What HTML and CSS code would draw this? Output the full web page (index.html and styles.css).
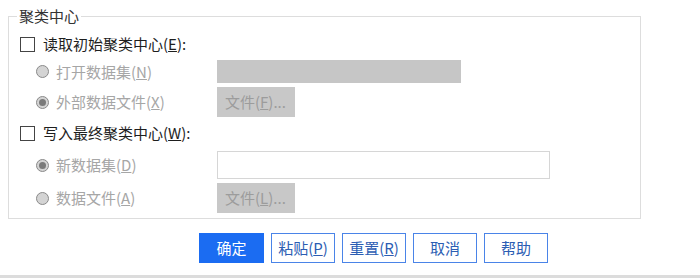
FILE: index.html
```html
<!DOCTYPE html>
<html lang="zh-CN">
<head>
<meta charset="utf-8">
<title>聚类中心</title>
<link rel="stylesheet" href="styles.css">
</head>
<body>
<div class="dialog">
  <fieldset class="group">
    <legend class="legend">聚类中心</legend>
    <div class="rows">
      <div class="row row-check1">
        <span class="checkbox"></span>
        <span class="check-label">读取初始聚类中心(<u>E</u>):</span>
      </div>
      <div class="row row-r1">
        <div class="radio-cell"><span class="radio"></span><span class="radio-label">打开数据集(<u>N</u>)</span></div>
        <div class="select-disabled"></div>
      </div>
      <div class="row row-r2">
        <div class="radio-cell"><span class="radio checked"></span><span class="radio-label">外部数据文件(<u>X</u>)</span></div>
        <div class="file-btn">文件(<u>F</u>)...</div>
      </div>
      <div class="row row-check2">
        <span class="checkbox"></span>
        <span class="check-label">写入最终聚类中心(<u>W</u>):</span>
      </div>
      <div class="row row-r3">
        <div class="radio-cell"><span class="radio checked"></span><span class="radio-label">新数据集(<u>D</u>)</span></div>
        <div class="text-input"></div>
      </div>
      <div class="row row-r4">
        <div class="radio-cell"><span class="radio"></span><span class="radio-label">数据文件(<u>A</u>)</span></div>
        <div class="file-btn">文件(<u>L</u>)...</div>
      </div>
    </div>
  </fieldset>
  <div class="buttons">
    <button class="btn primary">确定</button>
    <button class="btn">粘贴(<u>P</u>)</button>
    <button class="btn">重置(<u>R</u>)</button>
    <button class="btn">取消</button>
    <button class="btn">帮助</button>
  </div>
  <div class="bottom-bar"></div>
</div>
</body>
</html>
```

FILE: styles.css
```css
* { box-sizing: border-box; }
html, body {
  margin: 0;
  padding: 0;
  background: #ffffff;
}
body {
  font-family: "Noto Sans CJK SC", "Noto Sans", "Liberation Sans", sans-serif;
  font-size: 15px;
  color: #222222;
  width: 700px;
  height: 278px;
  overflow: hidden;
}
.dialog {
  display: flex;
  flex-direction: column;
  height: 278px;
}
.group {
  margin: 6px 0 0 8px;
  width: 633px;
  height: 213px;
  border: 1px solid #dddddd;
  padding: 0;
}
.legend {
  margin-left: 8px;
  padding: 0 2px;
  line-height: 20px;
  height: 20px;
  color: #333333;
}
.rows {
  display: flex;
  flex-direction: column;
  padding-top: 7px;
}
.row {
  display: flex;
  align-items: center;
}
.row-check1 { height: 22px; padding-left: 11px; }
.row-r1 { height: 23px; margin-top: 5px; }
.row-r2 { height: 30px; margin-top: 4px; }
.row-check2 { height: 20px; margin-top: 6px; padding-left: 11px; }
.row-r3 { height: 28px; margin-top: 8px; }
.row-r4 { height: 30px; margin-top: 4px; }

.checkbox {
  width: 15px;
  height: 15px;
  border: 1px solid #444444;
  background: #ffffff;
  flex: none;
}
.check-label {
  margin-left: 8px;
  line-height: 20px;
  color: #1e1e1e;
}
.radio-cell {
  width: 208px;
  display: flex;
  align-items: center;
  padding-left: 27px;
  flex: none;
}
.radio {
  width: 13px;
  height: 13px;
  border-radius: 50%;
  border: 1px solid #8a8a8a;
  background: #d4d4d4;
  flex: none;
  position: relative;
}
.radio.checked::after {
  content: "";
  position: absolute;
  left: 2px;
  top: 2px;
  width: 7px;
  height: 7px;
  border-radius: 50%;
  background: #7a7a7a;
}
.radio-label {
  margin-left: 7px;
  color: #a6a6a6;
  line-height: 20px;
}
.select-disabled {
  width: 244px;
  height: 23px;
  background: #c6c6c6;
}
.file-btn {
  width: 78px;
  height: 30px;
  background: #c8c8c8;
  color: #9c9c9c;
  line-height: 30px;
  padding-left: 8px;
}
.text-input {
  width: 333px;
  height: 28px;
  border: 1px solid #d6d6d6;
  background: #ffffff;
}
.buttons {
  display: flex;
  gap: 7px;
  padding-left: 199px;
  margin-top: 14px;
}
.btn {
  width: 64px;
  height: 30px;
  border: 1px solid #4a84e8;
  background: #ffffff;
  color: #2c5db3;
  font-family: inherit;
  font-size: 15px;
  padding: 0;
  line-height: 28px;
}
.btn.primary {
  background: #1b6cf2;
  border-color: #1b6cf2;
  color: #ffffff;
  width: 65px;
}
.bottom-bar {
  margin-top: auto;
  height: 3px;
  background: #dcdcdc;
}
```
